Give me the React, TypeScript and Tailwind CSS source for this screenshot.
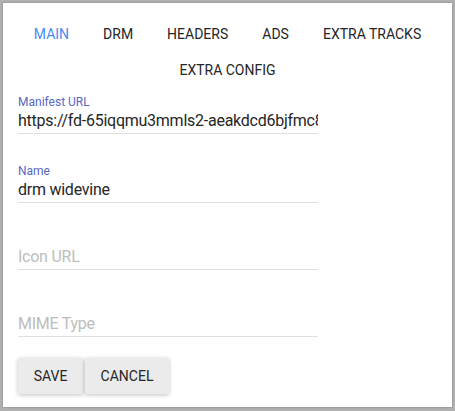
import React from "react";

const tabs = ["MAIN", "DRM", "HEADERS", "ADS", "EXTRA TRACKS", "EXTRA CONFIG"];

function Field({ label, value, placeholder, first }: { label?: string; value?: string; placeholder?: string; first?: boolean }) {
  return (
    <div className={`w-[300px] border-b border-[#e0e0e0] pb-[3px] ${first ? "mt-[7px]" : label ? "mt-[30px]" : "mt-[28px]"}`}>
      <div className="h-[14px] text-[12px] leading-[14px] text-[#5868c4]">{label}</div>
      <input
        readOnly
        value={value ?? ""}
        placeholder={placeholder}
        className="mt-[2px] block h-[19px] w-full bg-transparent text-[16px] leading-[19px] tracking-[-0.25px] text-[#262626] outline-none placeholder:text-[#bdbdbd]"
      />
    </div>
  );
}

export default function App() {
  return (
    <div className="h-[411px] w-[455px] bg-[#b0b0b0] pl-[3px] pr-[3px] pt-[3px] pb-[4px] font-['Roboto',sans-serif]">
      <div className="h-full w-full bg-white pt-[13px] shadow-[0_0_2px_rgba(0,0,0,0.3)]">
        <div className="flex flex-wrap justify-center">
          {tabs.map((t, i) => (
            <div
              key={t}
              className={`flex h-9 items-center px-[17px] text-[14px] ${i === 0 ? "text-[#4a8cf7]" : "text-[#262626]"}`}
            >
              {t}
            </div>
          ))}
        </div>

        <div className="px-[15px]">
          <Field first label="Manifest URL" value="https://fd-65iqqmu3mmls2-aeakdcd6bjfmc8b3w.z01.azurefd.net/manifest.mpd" />
          <Field label="Name" value="drm widevine" />
          <Field placeholder="Icon URL" />
          <Field placeholder="MIME Type" />

          <div className="mt-[21px] flex gap-[2px]">
            <button className="h-9 w-[65px] rounded-[2px] bg-[#ebebeb] text-[14px] text-[#262626] shadow-[0_1px_4px_rgba(0,0,0,0.25)]">
              SAVE
            </button>
            <button className="h-9 w-[84px] rounded-[2px] bg-[#ebebeb] text-[14px] text-[#262626] shadow-[0_1px_4px_rgba(0,0,0,0.25)]">
              CANCEL
            </button>
          </div>
        </div>
      </div>
    </div>
  );
}
